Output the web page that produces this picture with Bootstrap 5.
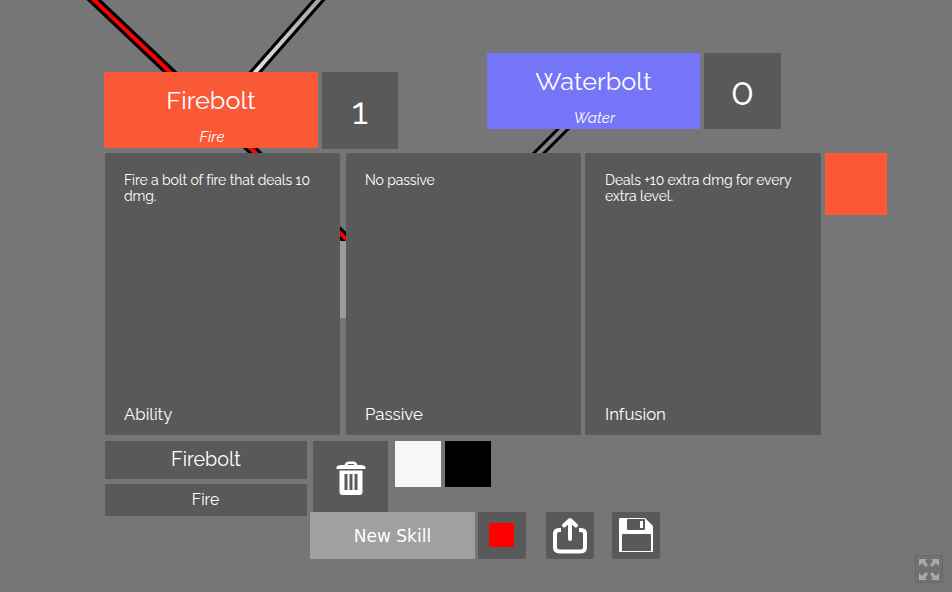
<!DOCTYPE html>
<html lang="en">
<head>
<meta charset="utf-8">
<meta name="viewport" content="width=device-width, initial-scale=1">
<title>Skill Tree</title>
<link href="https://cdn.jsdelivr.net/npm/bootstrap@5.3.0/dist/css/bootstrap.min.css" rel="stylesheet">
<style>
body{background:#767676;color:#fff;font-family:Raleway,Lato,"Open Sans",sans-serif;width:952px;height:592px}
.board{width:952px;height:592px}
.links,.skill{position:absolute}
.links{left:0;top:0}
.skill{gap:4px}
.skill-face{width:214px;height:76px;border-radius:2px}
.skill-name{font-size:25.200px;line-height:30px;padding-top:13px}
.skill-kind{font-size:15px;line-height:18px;padding:13px 0 0 2px;font-style:italic;letter-spacing:.1px}
.skill-level{width:76px;height:77px;background:#595959;font-size:38px;border-radius:1px}
.tone-fire{background:#fa5938}
.tone-water{background:#7575f8}
.at-fire{left:104px;top:72px}
.at-fire .skill-level{padding-bottom:1px}
.at-water{left:487px;top:53px}
.at-water .skill-face{width:213px;border-radius:0}
.at-water .skill-level{width:77px;height:76px;padding-top:1px}
.at-plain{left:270px;top:241px;width:214px;height:77px;background:#9b9b9b}
.editor{height:512px;padding:153px 0 0 105px}
.panel{background:#595959;width:235px;height:282px;padding:19px 19px 9px 19px;border-radius:2px}
.panel p{font-size:14px;line-height:16px;letter-spacing:-.13px;white-space:nowrap}
.panel h2{font-size:16.800px;line-height:24px;font-weight:400}
.g6{margin-left:6px}.g4{margin-left:4px}
.panel.wide{width:236px;padding-left:20px}
.swatch-lg{width:62px;height:62px}
.lower{margin-top:6px}
.fields{width:202px}
.field{background:#595959;border-radius:1px;padding-bottom:1px}
.field-name{height:38px;font-size:19.700px}
.field-kind{height:32px;margin-top:5px;font-size:15.800px;padding-right:1px}
.remove{width:75px;height:75px;background:#595959;padding:0 0 2px 0}
.swatch{width:46px;height:46px}
.light{background:#f7f7f7;margin-left:7px}
.dark{background:#000}
.tools{padding-left:310px}
.tool{width:48px;height:47px;background:#595959;border:0;border-radius:2px;padding:0}
.pick-tool{margin-left:3px}.export-tool{margin-left:20px}.save-tool{margin-left:18px}
.new-skill{width:165px;height:47px;background:#a0a0a0;color:#fff;border:0;border-radius:1px;font:17px "DejaVu Sans",sans-serif}
.pick{width:25px;height:24px;background:#f00;margin:0 1px 1px 0}
.full{position:absolute;left:915px;top:555px}
</style>
<script src="https://cdn.jsdelivr.net/npm/bootstrap@5.3.0/dist/js/bootstrap.bundle.min.js"></script>
</head>
<body class="overflow-hidden">
<main class="board position-relative overflow-hidden">
  <svg class="links" width="952" height="592" fill="none">
    <defs><linearGradient id="pale" gradientUnits="userSpaceOnUse" x1="318" y1="0" x2="255" y2="72"><stop stop-color="#a5a5a5"/><stop offset="1" stop-color="#e2e2e2"/></linearGradient></defs>
    <g stroke="#000" stroke-width="10.200"><path d="M83.500-10 353.500 245.900"/><path d="M327.500-10 246.500 82"/><path d="M573 119 523 169"/></g>
    <g stroke-width="4"><path stroke="#f00" d="M83.500-10 353.500 245.900"/><path stroke="url(#pale)" d="M327.500-10 246.500 82"/><path stroke="#858585" d="M573 119 523 169"/></g>
  </svg>
  <div class="skill at-plain"></div>
  <div class="skill at-fire d-flex">
    <div class="skill-face tone-fire text-center"><div class="skill-name">Firebolt</div><div class="skill-kind">Fire</div></div>
    <div class="skill-level d-flex align-items-center justify-content-center">1</div>
  </div>
  <div class="skill at-water d-flex">
    <div class="skill-face tone-water text-center"><div class="skill-name">Waterbolt</div><div class="skill-kind">Water</div></div>
    <div class="skill-level d-flex align-items-center justify-content-center">0</div>
  </div>
  <section class="editor position-relative">
    <div class="d-flex align-items-start">
      <article class="panel d-flex flex-column justify-content-between"><p class="m-0">Fire a bolt of fire that deals 10<br>dmg.</p><h2 class="m-0">Ability</h2></article>
      <article class="panel g6 d-flex flex-column justify-content-between"><p class="m-0">No passive</p><h2 class="m-0">Passive</h2></article>
      <article class="panel wide g4 d-flex flex-column justify-content-between"><p class="m-0">Deals +10 extra dmg for every<br>extra level.</p><h2 class="m-0">Infusion</h2></article>
      <div class="swatch-lg g4 tone-fire"></div>
    </div>
    <div class="lower d-flex align-items-start">
      <div class="fields">
        <div class="field field-name d-flex align-items-center justify-content-center">Firebolt</div>
        <div class="field field-kind d-flex align-items-center justify-content-center">Fire</div>
      </div>
      <div class="remove g6 d-flex align-items-center justify-content-center">
        <svg width="30" height="36" viewBox="0 0 30 36"><path fill="#fff" fill-rule="evenodd" d="M.5 7.500q0-2.500 5-2.500h3q1-3.500 4-3.500h5q3 0 4 3.500h3q5 0 5 2.500v1.500H.5zM12 4v1h6V4zM3.500 10.500h23V32q0 3-3 3h-17q-3 0-3-3zM8.500 14v16h3V14zm5 0v16h3V14zm5 0v16h3V14z"/></svg>
      </div>
      <div class="swatch light"></div>
      <div class="swatch dark g4"></div>
    </div>
  </section>
  <div class="tools d-flex position-relative">
    <button class="new-skill">New Skill</button>
    <button class="tool pick-tool d-flex align-items-center justify-content-center" aria-label="Colour"><span class="pick"></span></button>
    <button class="tool export-tool" aria-label="Export"><svg class="d-block" width="48" height="47" fill="none" stroke="#fff" stroke-width="4" stroke-linecap="round" stroke-linejoin="round"><path stroke-linecap="butt" d="M15 18h-2q-4 0-4 4v13q0 4.500 4.500 4.500h21q4.500 0 4.500-4.500V22q0-4-4-4h-2"/><path d="M24 27V9M18 13.500 24 8l6 5.500"/></svg></button>
    <button class="tool save-tool" aria-label="Save"><svg class="d-block" width="48" height="47"><path fill="#fff" fill-rule="evenodd" d="M8 6h25l8 8v26H7V7zM16 7q-1 0-1 1v9q0 1 1 1h16q1 0 1-1V8q0-1-1-1zM11 22q-1 0-1 1v16h29V23q0-1-1-1z"/><path fill="#fff" d="M28 9h3v7h-3z"/></svg></button>
  </div>
  <svg class="full" width="28" height="28" fill="none"><path d="M.5.500h27v27H.5z" fill="#717171" stroke="#676767"/><g fill="#aaa"><path d="M4 4h8l-2 2 3 4-2 2-4-4-3 3z"/><path d="M24 4h-8l2 2-3 4 2 2 4-4 3 3z"/><path d="M4 25h8l-2-2 3-4-2-2-4 4-3-3z"/><path d="M24 25h-8l2-2-3-4 2-2 4 4 3-3z"/></g></svg>
</main>
</body>
</html>
